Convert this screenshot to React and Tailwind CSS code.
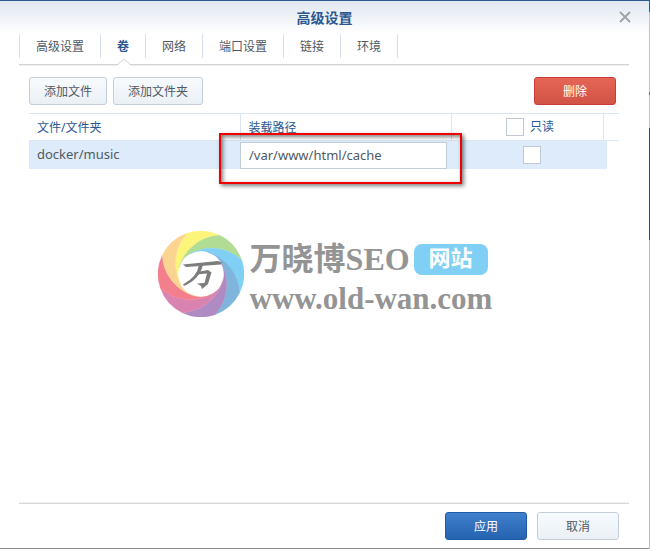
import React from "react";

const tabs = ["高级设置", "卷", "网络", "端口设置", "链接", "环境"];

const arms = [
  ["#fdf47c", -29],
  ["#b0dc94", 16],
  ["#80d0f5", 61],
  ["#7fb4dc", 106],
  ["#ae8bc3", 151],
  ["#d983b0", 196],
  ["#f47f8c", 241],
  ["#fcd492", 286],
];

function Ring() {
  return (
    <svg viewBox="0 0 86 86" className="size-[86px] shrink-0" aria-hidden="true">
      {arms.map(([color, angle]) => (
        <path
          key={angle}
          fill={color}
          stroke={color}
          strokeWidth="0.3"
          transform={`rotate(${angle} 43 43)`}
          d="M20 43A44.7 44.7 0 0 1 50.47 0.65A43 43 0 0 1 78.22 18.34A44.7 44.7 0 0 0 26.74 26.74A23 23 0 0 0 20 43Z"
        />
      ))}
      <g fill="#7c7c7c">
        <path d="M25 33.5L60 30L64 31.5L63 33.5L28 36Z" />
        <path d="M41 34L45 33.5Q42 48 26 55L25 53.5Q39 46 41 34Z" />
        <path d="M39 41L50 39L53.5 41.5L50 53L44 58L43 55L39 52.5L46.5 52L49 42.5L38 43.5Z" />
      </g>
    </svg>
  );
}

export default function App() {
  const btn = "h-7 rounded-[3px] border pt-0.5 text-xs";
  const light = "border-[#c3ced9] bg-linear-to-b from-[#f7fbfe] to-[#ebf0f5] text-[#505a64]";
  return (
    <div className="bg-[linear-gradient(#2b5890_12px,#c4c4c4_12px,#c4c4c4_92px,#707070_92px,#707070_95px,#c4c4c4_95px,#c4c4c4_128px,#1f4a7c_128px,#1f4a7c_240px,#bcbcbc_240px)] pr-px">
      <div className="flex min-h-screen flex-col border-y border-t-[#2b5890] border-b-[#8c8c8c] bg-white bg-linear-to-b from-[#e0e6f1] to-white to-[32px] font-['Noto_Sans','Noto_Sans_CJK_SC',sans-serif] text-xs text-[#505a64]">
        <header className="relative flex h-[33px] shrink-0 items-center justify-center">
          <h1 className="text-sm font-bold text-[#2b5890]">高级设置</h1>
          <button aria-label="关闭" className="absolute top-2.5 right-[18px] text-[#a0a5aa]">
            <svg viewBox="0 0 12 12" className="size-3">
              <path d="M1 1L11 11M11 1L1 11" stroke="currentColor" strokeWidth="2" />
            </svg>
          </button>
        </header>

        <nav className="mr-5 ml-[19px] flex h-[31px] shrink-0 border-b border-[#d2d4d6] shadow-[0_1px_0_#ededed]">
          {tabs.map((t, i) => (
            <button
              key={t}
              className={"relative h-6 border-r border-[#d5e0ec] px-4 pt-0.5 " + (i === 0 ? "border-l " : "") + (i === 1 ? "font-bold text-[#2b5890]" : "")}
            >
              {t}
              {i === 1 && (
                <svg viewBox="0 0 14 8" className="absolute top-6 left-4 h-2 w-3.5">
                  <path d="M0 8L7 1L14 8Z" fill="#fff" />
                  <path d="M0 7L7 1L14 7" fill="none" stroke="#d2d4d6" />
                </svg>
              )}
            </button>
          ))}
        </nav>

        <main className="relative flex grow flex-col pt-3 pr-[30px] pl-[29px]">
          <div className="flex gap-1.5 pr-[3px]">
            <button className={btn + " px-3.5 " + light}>添加文件</button>
            <button className={btn + " px-3.5 " + light}>添加文件夹</button>
            <button className={btn + " ml-auto w-[82px] border-[#c93c37] bg-linear-to-b from-[#e66556] to-[#d15345] text-white"}>删除</button>
          </div>
          <table className="mt-2 w-full table-fixed border-collapse text-left">
            <colgroup>
              <col />
              <col />
              <col className="w-[152px]" />
              <col className="w-4" />
            </colgroup>
            <thead>
              <tr className="h-[27px] border-y border-[#dce6f0] text-[#2b5890]">
                <th className="border-r border-[#dce6f0] px-2 pt-0.5 pb-0 font-normal">文件/文件夹</th>
                <th className="border-r border-[#dce6f0] px-2 pt-0.5 pb-0 font-normal">装载路径</th>
                <th className="border-r border-[#dce6f0] py-0 pr-0 pl-1.5 font-normal">
                  <label className="flex items-center justify-center gap-1.5">
                    <input type="checkbox" className="size-[18px] appearance-none border border-[#c0c8d2] bg-white" />
                    只读
                  </label>
                </th>
                <th className="p-0" />
              </tr>
            </thead>
            <tbody>
              <tr className="h-7 text-[13px]">
                <td className="bg-[#deebfb] px-2 py-0">docker/music</td>
                <td className="bg-[#deebfb] p-0 pr-1">
                  <input aria-label="装载路径" defaultValue="/var/www/html/cache" className="block h-[27px] w-full border border-[#c0ccd8] bg-white px-2 outline-none" />
                </td>
                <td className="bg-[#deebfb] py-0 pr-0 pl-2.5">
                  <input aria-label="只读" type="checkbox" className="mx-auto block size-[18px] appearance-none border border-[#c0c8d2] bg-white" />
                </td>
                <td className="p-0">
                  <div className="h-7 w-1 bg-[#deebfb]" />
                </td>
              </tr>
            </tbody>
          </table>
          <div className="pointer-events-none absolute top-[68px] left-[219px] h-[51px] w-[243px] border-2 border-[#f00000] shadow-[2px_2px_4px_#00000080,inset_2px_2px_4px_#00000080]" />

          <div className="mt-[60px] flex items-center justify-center gap-1.5 pl-0.5 font-['Liberation_Serif','Noto_Sans_CJK_SC',serif] font-bold text-[#949494]">
            <Ring />
            <div className="pt-2.5">
              <div className="flex items-center gap-1">
                <span className="text-[32px] leading-10">万晓博SEO</span>
                <span className="flex h-[31px] w-[74px] items-center justify-center rounded-lg bg-[#80cff4] text-[22px] text-white">网站</span>
              </div>
              <div className="text-[31px] leading-10">www.old-wan.com</div>
            </div>
          </div>
        </main>

        <footer className="mr-5 ml-[19px] flex h-[45px] shrink-0 justify-end gap-2.5 border-t border-[#d8d8d8] pt-2 pr-2.5 shadow-[0_-1px_0_#f0f0f0]">
          <button className={btn + " w-[82px] border-[#1f5aa5] bg-linear-to-b from-[#4080cc] to-[#2563b0] text-white"}>应用</button>
          <button className={btn + " w-[82px] " + light}>取消</button>
        </footer>
      </div>
    </div>
  );
}
